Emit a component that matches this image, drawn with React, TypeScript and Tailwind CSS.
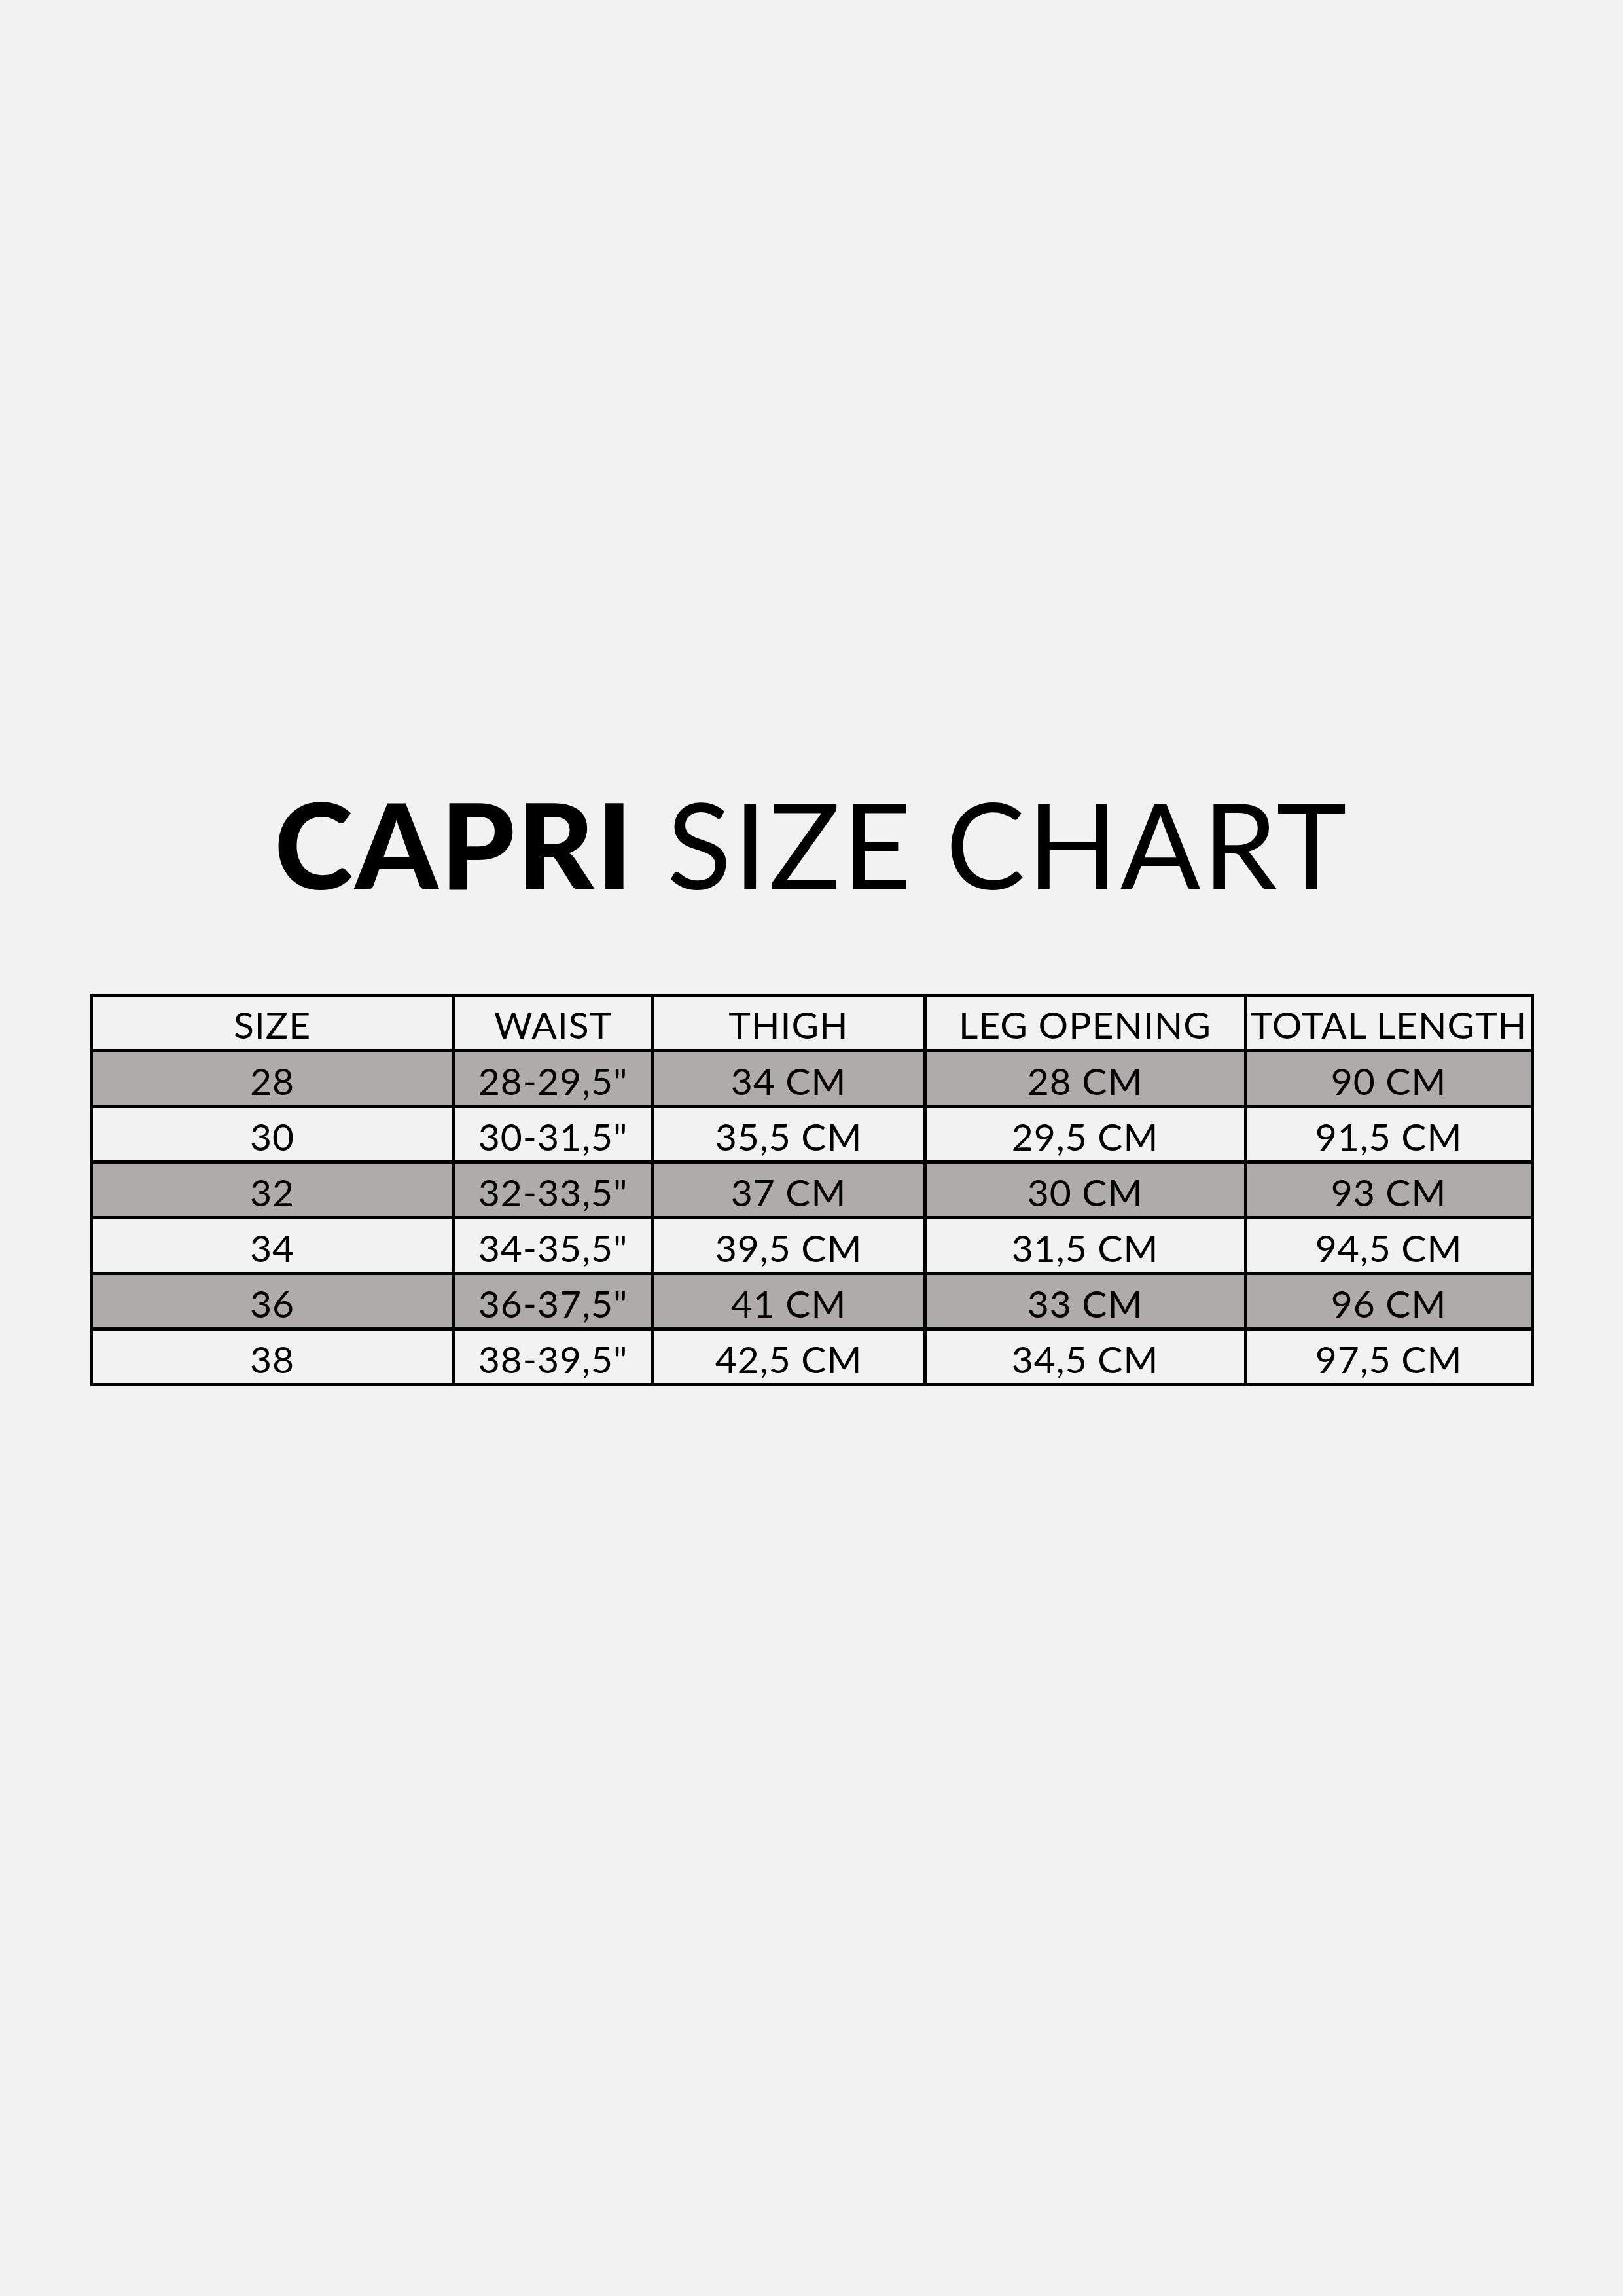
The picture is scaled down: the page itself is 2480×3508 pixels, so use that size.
const headers = ["SIZE", "WAIST", "THIGH", "LEG OPENING", "TOTAL LENGTH"]

const rows = [
  ["28", '28-29,5"', "34 CM", "28 CM", "90 CM"],
  ["30", '30-31,5"', "35,5 CM", "29,5 CM", "91,5 CM"],
  ["32", '32-33,5"', "37 CM", "30 CM", "93 CM"],
  ["34", '34-35,5"', "39,5 CM", "31,5 CM", "94,5 CM"],
  ["36", '36-37,5"', "41 CM", "33 CM", "96 CM"],
  ["38", '38-39,5"', "42,5 CM", "34,5 CM", "97,5 CM"],
]

const colWidths = ["w-[554px]", "w-[304px]", "w-[416px]", "w-[490px]", "w-[438px]"]

export default function App() {
  return (
    <main className="flex flex-col items-center bg-[#f2f2f2] w-[2480px] h-[3508px] pt-[1184px]">
      <h1 className="font-['Lato',sans-serif] text-[182px] leading-[210px] text-black tracking-[3px]">
        <span className="font-black">CAPRI</span>{" "}
        <span className="font-normal">SIZE CHART</span>
      </h1>
      <table className="mt-[124px] table-fixed border-collapse border-[5px] border-black font-['Lato',sans-serif] text-[57px] tracking-[1px] text-black whitespace-nowrap">
        <thead>
          <tr className="h-[85px] bg-[#f2f2f2]">
            {headers.map((h, i) => (
              <th
                key={h}
                className={`${colWidths[i]} border-[5px] border-black p-0 pt-[4px] text-center font-normal leading-none`}
              >
                {h}
              </th>
            ))}
          </tr>
        </thead>
        <tbody>
          {rows.map((row, r) => (
            <tr key={row[0]} className={r % 2 === 0 ? "h-[85px] bg-[#aeabaa]" : "h-[85px] bg-[#f2f2f2]"}>
              {row.map((cell, i) => (
                <td key={i} className="border-[5px] border-black p-0 pt-[6px] text-center leading-none">
                  {cell}
                </td>
              ))}
            </tr>
          ))}
        </tbody>
      </table>
    </main>
  )
}
